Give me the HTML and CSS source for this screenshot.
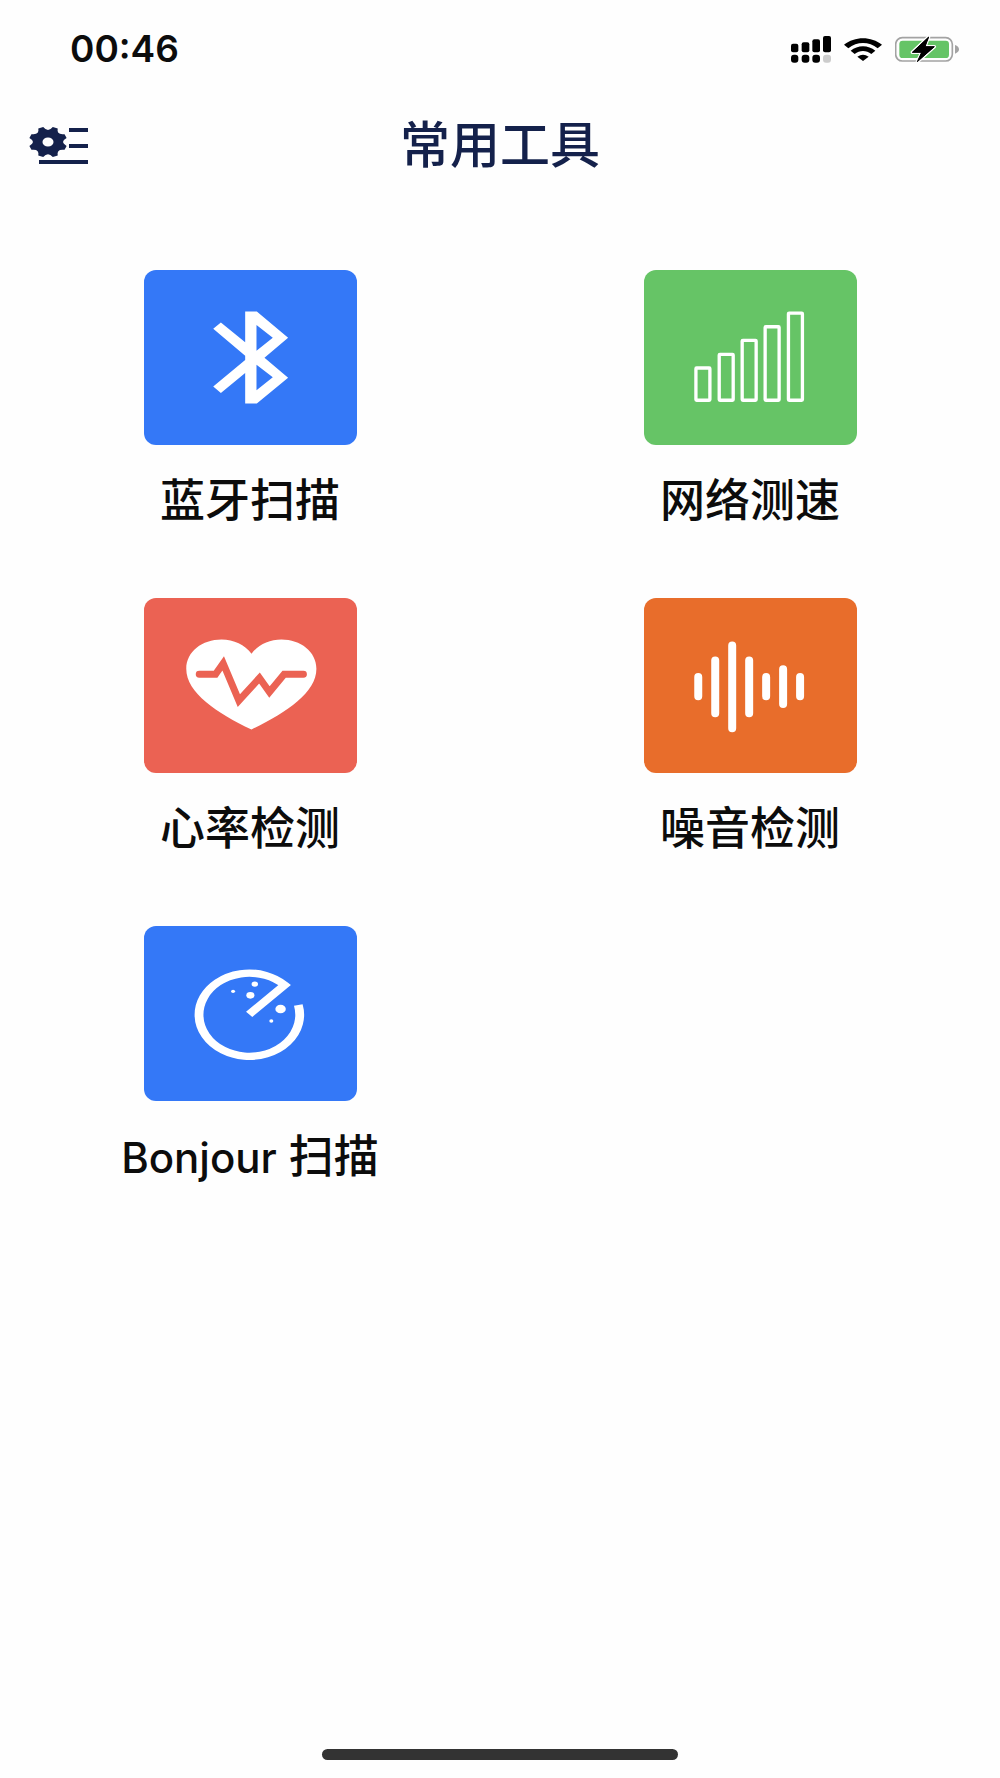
FILE: index.html
```html
<!DOCTYPE html>
<html lang="zh-CN">
<head>
    <meta charset="UTF-8">
    <meta name="viewport" content="width=device-width, initial-scale=1.0">
    <title>常用工具</title>
    <link rel="stylesheet" href="styles.css">
</head>
<body>

<div class="status">
    <div class="time">00:46</div>
    <div class="status-icons">
        <svg width="40" height="27" viewBox="0 0 120 81">
            <rect x="0" y="23" width="22" height="26" rx="6"/>
            <rect x="32" y="19" width="23" height="30" rx="6"/>
            <rect x="64" y="10" width="23" height="39" rx="6"/>
            <rect x="96" y="0" width="24" height="49" rx="6"/>
            <rect x="0" y="56" width="22" height="24" rx="9"/>
            <rect x="32" y="56" width="23" height="24" rx="9"/>
            <rect x="64" y="56" width="23" height="24" rx="9"/>
            <rect x="96" y="56" width="24" height="24" rx="9" fill="#ccc"/>
        </svg>
        <svg width="38" height="23" viewBox="0 0 114 69">
            <path d="M0 20C32 -6 82 -6 114 20L101 31C75 10 39 10 13 31Z"/>
            <path d="M20 38C41 20 73 20 94 38L82 48C67 36 47 36 32 48Z"/>
            <path d="M40 56Q57 44 74 56L57 69Z"/>
        </svg>
        <svg width="64" height="27" viewBox="0 0 192 81">
            <rect x="2" y="5" width="170" height="70" rx="20" fill="none" stroke="#a3a3a3" stroke-width="5"/>
            <rect x="13" y="14" width="149" height="52" rx="10" fill="#65c466"/>
            <path d="M180 27Q192 31 192 40T180 53Z" fill="#a3a3a3"/>
            <path d="M101 3L52 49H80L67 77L118 32H90Z" stroke="#fff" stroke-width="10" stroke-linejoin="round" paint-order="stroke"/>
            <path d="M101 3L52 49H80L67 77L118 32H90Z" stroke="#000" stroke-width="3" stroke-linejoin="round"/>
        </svg>
    </div>
</div>

<header class="header">
    <button class="settings" aria-label="设置">
        <svg width="60" height="40" viewBox="0 0 60 40">
            <!-- gear -->
            <path transform="translate(19 16) scale(1.2 0.97)" fill-rule="evenodd" d="M15.5 4L13.8 8.1Q7 7 8.1 13.8L4 15.5Q0 9.5 -4 15.5L-8.1 13.8Q-7 7 -13.8 8.1L-15.5 4Q-9.5 0 -15.5 -4L-13.8 -8.1Q-7 -7 -8.1 -13.8L-4 -15.5Q0 -9.5 4 -15.5L8.1 -13.8Q7 -7 13.8 -8.1L15.5 -4Q9.5 0 15.5 4ZM4.6 0A4.6 4.6 0 1 0 -4.6 0A4.6 4.6 0 1 0 4.6 0Z"/>
            <path d="M40 2H59V6H40ZM40 18H59V22H40ZM10 34H59V38H10Z"/>
        </svg>
    </button>
    <h1>常用工具</h1>
</header>

<main class="tools">
    <a class="tool" href="#bluetooth">
        <span class="tile blue">
            <svg viewBox="0 0 640 525">
                <path fill-rule="evenodd" d="M304 124H339L433 203L362 263L433 323L339 401H304V309L231 369L208 350L304 270V257L208 176L231 157L304 217ZM338 165V242L387 203ZM338 284V361L387 322Z"/>
            </svg>
        </span>
        <span class="label">蓝牙扫描</span>
    </a>

    <a class="tool" href="#network">
        <span class="tile green">
            <svg viewBox="0 0 640 525">
                <g fill="none" stroke="#fff" stroke-width="10">
                    <rect x="156" y="294" width="42" height="97" rx="2"/>
                    <rect x="226" y="253" width="42" height="138" rx="2"/>
                    <rect x="295" y="211" width="42" height="180" rx="2"/>
                    <rect x="364" y="170" width="42" height="221" rx="2"/>
                    <rect x="434" y="129" width="42" height="262" rx="2"/>
                </g>
            </svg>
        </span>
        <span class="label">网络测速</span>
    </a>

    <a class="tool" href="#heart">
        <span class="tile red">
            <svg viewBox="0 0 640 525">
                <path d="M323 167C303 140 270 124 233 124C175 124 127 160 127 212C127 285 220 345 323 395C425 345 518 285 518 212C518 160 470 124 413 124C376 124 343 140 323 167Z"/>
                <path d="M166 229H215L238 196L285 308L347 240L377 282L421 229H479" fill="none" stroke="#eb6253" stroke-width="21" stroke-linecap="round"/>
            </svg>
        </span>
        <span class="label">心率检测</span>
    </a>

    <a class="tool" href="#noise">
        <span class="tile orange">
            <svg viewBox="0 0 640 525">
                <path d="M163 237V295M214 187V346M265 142V391M316 187V346M367 237V295M418 214V318M469 237V295" stroke="#fff" stroke-width="24" stroke-linecap="round"/>
            </svg>
        </span>
        <span class="label">噪音检测</span>
    </a>

    <a class="tool" href="#bonjour">
        <span class="tile blue">
            <svg viewBox="0 0 640 525">
                <g transform="translate(316 265) scale(1.21 1)">
                    <path d="M122 -28A125 125 0 1 1 88 -88L0 0" fill="none" stroke="#fff" stroke-width="22"/>
                    <circle cx="14" cy="-91" r="8"/>
                    <circle cx="-40" cy="-69" r="5"/>
                    <circle cx="3" cy="-57" r="10"/>
                    <circle cx="78" cy="-16" r="13"/>
                    <circle cx="55" cy="20" r="5"/>
                </g>
            </svg>
        </span>
        <span class="label"><span class="latin">Bonjour</span> 扫描</span>
    </a>
</main>

<div class="home-bar"></div>

</body>
</html>
```

FILE: styles.css
```css
* { box-sizing: border-box; }
body { margin: 0; min-height: 100vh; display: flex; flex-direction: column; background: #fefefe; color: #0c0c0c; font-family: Inter, "Noto Sans CJK SC", sans-serif; }
svg { display: block; }

.status { display: flex; justify-content: space-between; align-items: center; height: 98px; padding: 0 41px 0 70px; }
.time { font-size: 37px; font-weight: 600; line-height: 40px; }
.status-icons { display: flex; align-items: center; gap: 13px; }

.header { display: grid; grid-template-columns: 1fr auto 1fr; align-items: center; height: 94px; padding: 0 29px; color: #14214b; }
.header h1 { margin: 0; font-size: 50px; font-weight: 500; line-height: 64px; }
.settings { justify-self: start; padding: 2px 0 0; border: 0; background: none; color: inherit; cursor: pointer; }
.settings svg { fill: #14214b; }

.tools { display: grid; grid-template-columns: 1fr 1fr; row-gap: 65px; padding-top: 78px; }
.tool { display: flex; flex-direction: column; align-items: center; gap: 24px; color: inherit; text-decoration: none; }
.tile { width: 213px; height: 175px; border-radius: 12px; }
.tile svg { width: 100%; height: 100%; fill: #fff; }
.label { font-size: 45px; font-weight: 500; line-height: 64px; white-space: nowrap; }
.latin { font-size: 42px; }

.blue { background: #3478f7; }
.green { background: #66c466; }
.red { background: #eb6253; }
.orange { background: #e86d2b; }

.home-bar { width: 356px; height: 11px; margin: auto auto 18px; border-radius: 6px; background: #333; }
```
